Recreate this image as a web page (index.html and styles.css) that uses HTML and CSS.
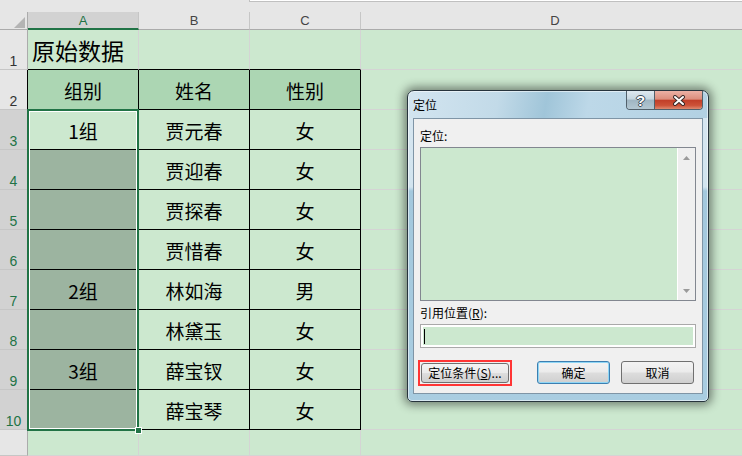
FILE: index.html
```html
<!DOCTYPE html>
<html lang="zh-CN">
<head>
  <meta charset="UTF-8">
  <meta name="viewport" content="width=device-width, initial-scale=1.0">
  <title>定位</title>
  <link rel="stylesheet" href="styles.css">
</head>
<body>
  <div class="topbar"><div class="fx"></div></div>

  <div class="sheet">
    <div class="corner"><i></i></div>
    <div class="hd sel">A</div>
    <div class="hd">B</div>
    <div class="hd">C</div>
    <div class="hd">D</div>

    <div class="rh">1</div>
    <div class="c title bb">原始数据</div>
    <div class="c bb"></div>
    <div class="c bb"></div>
    <div class="c"></div>

    <div class="rh blk">2</div>
    <div class="c b th">组别</div>
    <div class="c b th">姓名</div>
    <div class="c b th">性别</div>
    <div class="c"></div>

    <div class="rh sel">3</div>
    <div class="c b">1组</div>
    <div class="c b">贾元春</div>
    <div class="c b">女</div>
    <div class="c"></div>

    <div class="rh sel">4</div>
    <div class="c b s"></div>
    <div class="c b">贾迎春</div>
    <div class="c b">女</div>
    <div class="c"></div>

    <div class="rh sel">5</div>
    <div class="c b s"></div>
    <div class="c b">贾探春</div>
    <div class="c b">女</div>
    <div class="c"></div>

    <div class="rh sel">6</div>
    <div class="c b s"></div>
    <div class="c b">贾惜春</div>
    <div class="c b">女</div>
    <div class="c"></div>

    <div class="rh sel">7</div>
    <div class="c b s">2组</div>
    <div class="c b">林如海</div>
    <div class="c b">男</div>
    <div class="c"></div>

    <div class="rh sel">8</div>
    <div class="c b s"></div>
    <div class="c b">林黛玉</div>
    <div class="c b">女</div>
    <div class="c"></div>

    <div class="rh sel">9</div>
    <div class="c b s">3组</div>
    <div class="c b">薛宝钗</div>
    <div class="c b">女</div>
    <div class="c"></div>

    <div class="rh sel">10</div>
    <div class="c b s"></div>
    <div class="c b">薛宝琴</div>
    <div class="c b">女</div>
    <div class="c"></div>

    <div class="rh"></div>
    <div class="c"></div>
    <div class="c"></div>
    <div class="c"></div>
    <div class="c"></div>

    <div class="selection"><span class="handle"></span></div>
  </div>

  <div class="dialog">
    <div class="dialog-title">
      <span class="caption">定位</span>
      <div class="caps">
        <span class="cap help">?</span>
        <span class="cap close">
          <svg width="14" height="11" viewBox="0 0 14 11">
            <path d="M3 2 L11 9 M11 2 L3 9" stroke="#3a2a28" stroke-width="4" stroke-linecap="round"/>
            <path d="M3 2 L11 9 M11 2 L3 9" stroke="#fff" stroke-width="2" stroke-linecap="round"/>
          </svg>
        </span>
      </div>
    </div>
    <div class="dialog-body">
      <div class="label">定位:</div>
      <div class="list">
        <div class="list-area"></div>
        <div class="vscroll"><i class="arrow up"></i><i class="arrow down"></i></div>
      </div>
      <div class="label second">引用位置(<u>R</u>):</div>
      <div class="ref"><i class="caret"></i></div>
      <div class="buttons">
        <span class="mark"><button type="button" class="btn wide">定位条件(<u>S</u>)...</button></span>
        <button type="button" class="btn default">确定</button>
        <button type="button" class="btn">取消</button>
      </div>
    </div>
  </div>
</body>
</html>
```

FILE: styles.css
```css
body {
  margin: 0;
  width: 742px;
  height: 456px;
  overflow: hidden;
  position: relative;
  background: #cce8cf;
  font-family: "Noto Sans CJK SC", sans-serif;
}

.topbar {
  height: 12px;
  background: #e6e6e6;
}

.fx {
  margin-left: 249px;
  height: 1px;
  background: #fff;
  border-left: 1px solid #c0c0c0;
  border-bottom: 1px solid #c0c0c0;
}

.sheet {
  position: relative;
  display: grid;
  grid-template-columns: 28px 111px 111px 111px 389px;
  grid-template-rows: 18px repeat(10, 40px) 26px;
}

.sheet > div {
  box-sizing: border-box;
}

.corner {
  background: #e6e6e6;
  border-right: 1px solid #ababab;
  border-bottom: 1px solid #ababab;
  display: flex;
  justify-content: flex-end;
  align-items: flex-end;
  padding: 0 2px 1px 0;
}

.corner i {
  width: 11px;
  height: 11px;
  background: #b4b4b4;
  clip-path: polygon(100% 0, 100% 100%, 0 100%);
}

.hd {
  background: #e6e6e6;
  border-right: 1px solid #c6c6c6;
  border-bottom: 1px solid #ababab;
  color: #444;
  font-family: "Liberation Sans", sans-serif;
  font-size: 13px;
  display: flex;
  align-items: center;
  justify-content: center;
}

.hd.sel {
  background: #d2d2d2;
  color: #217346;
  border-bottom: 2px solid #217346;
}

.rh {
  background: #e6e6e6;
  border-right: 1px solid #ababab;
  border-bottom: 1px solid #c6c6c6;
  color: #333;
  font-family: "Liberation Sans", sans-serif;
  font-size: 14px;
  line-height: 13px;
  display: flex;
  align-items: flex-end;
  justify-content: center;
  padding-bottom: 1px;
}

.rh.sel {
  background: #d2d2d2;
  color: #217346;
}

.rh.blk {
  border-right-color: #000;
}

.c {
  border-right: 1px solid #d4d4d4;
  border-bottom: 1px solid #d4d4d4;
  display: flex;
  align-items: center;
  justify-content: center;
  padding-top: 2px;
  font-size: 19px;
  line-height: 1;
  color: #000;
}

.c.bb {
  border-bottom-color: #000;
}

.c.b {
  border-right-color: #000;
  border-bottom-color: #000;
}

.c.th {
  background: #acd6b3;
}

.c.s {
  background: #9cb4a0;
}

.c.title {
  justify-content: flex-start;
  padding-left: 4px;
  font-size: 23px;
}

/* selected range A3:A10, drawn over the cells */
.selection {
  position: absolute;
  grid-column: 2 / 3;
  grid-row: 4 / 12;
  top: -1px;
  bottom: -1px;
  left: -1px;
  right: 0;
  border: 2px solid #217346;
  box-shadow: inset 0 0 0 1px #fff;
  z-index: 2;
  pointer-events: none;
}

.handle {
  position: absolute;
  right: -5px;
  bottom: -5px;
  width: 5px;
  height: 5px;
  background: #217346;
  border: 1px solid #fff;
}

/* 定位 dialog */
.dialog {
  position: absolute;
  left: 407px;
  top: 90px;
  width: 302px;
  height: 312px;
  box-sizing: border-box;
  padding: 0 5px 7px;
  border: 1px solid #27343d;
  border-radius: 7px 7px 5px 5px;
  background:
    linear-gradient(100deg, #d3e5f0 0%, #c2dae8 30%, #a0c5d9 46%, #bdd8e8 60%, #b2d1e3 100%) 0 0 / 100% 27px no-repeat,
    linear-gradient(#d8e7f1 0, #d2e4ef 96px, #a3c8dd 100px, #a9cde1 100%);
  box-shadow: inset 0 0 0 1px rgba(255, 255, 255, 0.55), 0 0 10px 3px rgba(0, 0, 0, 0.45);
  display: flex;
  flex-direction: column;
  font-size: 12px;
  z-index: 5;
}

.dialog-title {
  height: 27px;
  display: flex;
  align-items: center;
  flex-shrink: 0;
}

.caption {
  color: #000;
  line-height: 1;
  padding-top: 1px;
}

.caps {
  margin-left: auto;
  align-self: flex-start;
  display: flex;
  height: 18px;
  border: 1px solid #51606b;
  border-top: none;
  border-radius: 0 0 4px 4px;
  overflow: hidden;
}

.cap {
  display: flex;
  align-items: center;
  justify-content: center;
}

.help {
  width: 27px;
  border-right: 1px solid #51606b;
  background: linear-gradient(#dfe9f0 0, #c5d6e0 45%, #9fb5c2 50%, #b3c7d2 100%);
  color: #fff;
  font-family: "Liberation Sans", sans-serif;
  font-weight: bold;
  font-size: 15px;
  text-shadow: -1px 0 #3d4b55, 1px 0 #3d4b55, 0 -1px #3d4b55, 0 1px #3d4b55;
}

.close {
  width: 47px;
  background: linear-gradient(#ecb1a5 0, #dc8e7d 45%, #c23f29 52%, #cd5238 80%, #de8a70 100%);
}

.dialog-body {
  flex: 1;
  box-sizing: border-box;
  background: #f0f0f0;
  border: 1px solid #7f95a6;
  padding: 9px 6px 0;
}

.label {
  line-height: 16px;
  color: #000;
}

.label.second {
  margin-top: 4px;
}

.list {
  margin-top: 3px;
  height: 154px;
  box-sizing: border-box;
  border: 1px solid #828790;
  display: flex;
}

.list-area {
  flex: 1;
  background: #cce8cf;
}

.vscroll {
  width: 17px;
  border-left: 1px solid #fff;
  background: #efefef;
  display: flex;
  flex-direction: column;
  justify-content: space-between;
  align-items: center;
  padding: 8px 0 7px;
}

.arrow {
  width: 7px;
  height: 4px;
  background: #9a9a9a;
}

.arrow.up {
  clip-path: polygon(50% 0, 100% 100%, 0 100%);
}

.arrow.down {
  clip-path: polygon(0 0, 100% 0, 50% 100%);
}

.ref {
  margin-top: 3px;
  height: 24px;
  box-sizing: border-box;
  border: 1px solid #a9a9a9;
  background: #cce8cf;
  box-shadow: inset 0 0 0 2px #fff;
  display: flex;
  align-items: center;
  padding-left: 3px;
}

.caret {
  width: 1px;
  height: 15px;
  background: #000;
}

.buttons {
  margin-top: 12px;
  height: 25px;
  display: flex;
  align-items: center;
  gap: 11px;
  padding: 0 2px 0 0;
}

.mark {
  display: flex;
  border: 2px solid #ff3535;
  padding: 1px;
  margin-left: -2px;
  margin-right: auto;
}

.btn {
  width: 73px;
  height: 23px;
  padding: 0;
  border: 1px solid #707070;
  border-radius: 3px;
  background: linear-gradient(#f3f3f3 0, #ebebeb 48%, #dddddd 52%, #cfcfcf 100%);
  font-family: "Noto Sans CJK SC", sans-serif;
  font-size: 12px;
  color: #000;
}

.btn.wide {
  width: 88px;
  height: 20px;
}

.btn.default {
  border-color: #3c7fb1;
  box-shadow: inset 0 0 0 1px #8fd6f5;
}
```
